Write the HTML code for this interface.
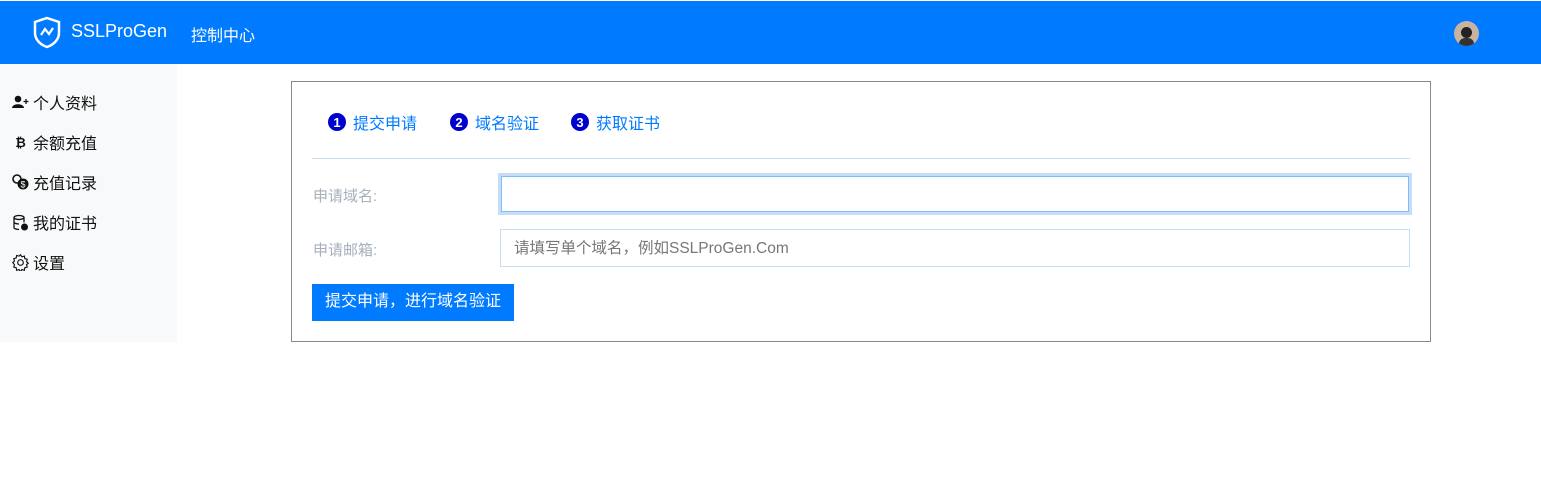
<!DOCTYPE html>
<html><head><meta charset="utf-8"><style>
*{margin:0;padding:0;box-sizing:border-box}
body{width:1541px;height:504px;background:#fff;font-family:"Liberation Sans","Noto Sans CJK SC",sans-serif;position:relative;overflow:hidden;font-size:15px}
.hdr{position:absolute;left:0;top:1px;width:1541px;height:63px;background:#007bff;color:#fff}
.side{position:absolute;left:0;top:64px;width:177px;height:278px;background:#f8f9fa}
.side div{position:absolute;left:12px;font-size:16px;color:#111;display:flex;align-items:center}
.side svg{margin-right:4px}
.card{position:absolute;left:291px;top:81px;width:1140px;height:261px;border:1px solid #888}
.step{position:absolute;top:110px;color:#007bff;display:flex;align-items:center;font-size:16px}
.num{width:18px;height:18px;border-radius:50%;background:#0000cc;color:#fff;font-size:13px;font-weight:bold;display:inline-flex;align-items:center;justify-content:center;margin-right:7px}
.lbl{position:absolute;left:313px;color:#a5b0bb;font-size:15px}
</style></head><body>
<div class="hdr">
<svg style="position:absolute;left:32px;top:15px" width="30" height="33" viewBox="0 0 30 33"><path d="M15 2 L27 6 V17 C27 24 21 29 15 31 C9 29 3 24 3 17 V6 Z" fill="none" stroke="#fff" stroke-width="2.5"/><path d="M9 19 L13 13 L17 18 L21 12" fill="none" stroke="#fff" stroke-width="2.2"/></svg>
<div style="position:absolute;left:71px;top:20px;font-size:18px">SSLProGen</div>
<div style="position:absolute;left:191px;top:21px;font-size:16px">控制中心</div>
<div style="position:absolute;left:1454px;top:20px;width:25px;height:25px;border-radius:50%;background:#c9b3a0;overflow:hidden"><div style="position:absolute;left:7px;top:6px;width:11px;height:11px;border-radius:50%;background:#222"></div><div style="position:absolute;left:5px;top:17px;width:15px;height:8px;background:#333;border-radius:6px 6px 0 0"></div></div>
</div>
<div class="side">
<div style="top:26px"><svg width="17" height="14" viewBox="0 0 17 14"><circle cx="6" cy="4" r="3.3" fill="#111"/><path d="M0 13 C0 8 12 8 12 13Z" fill="#111"/><path d="M14 4v5M11.5 6.5h5" stroke="#111" stroke-width="1.3"/></svg>个人资料</div>
<div style="top:66px"><span style="font-weight:bold;width:17px;margin-right:4px;text-align:center;font-size:13px">₿</span>余额充值</div>
<div style="top:106px"><svg width="17" height="16" viewBox="0 0 17 16"><circle cx="5" cy="5" r="4" fill="none" stroke="#111" stroke-width="1.6"/><circle cx="11" cy="10" r="5.5" fill="#111"/><text x="11" y="13.5" font-size="9" fill="#fff" text-anchor="middle" font-family="Liberation Sans">$</text></svg>充值记录</div>
<div style="top:146px"><svg width="17" height="17" viewBox="0 0 17 17"><ellipse cx="7" cy="3.5" rx="5" ry="2" fill="none" stroke="#111" stroke-width="1.3"/><path d="M2 3.5v10c0 1 2 2 5 2M12 3.5v5M2 8c0 1 2 2 5 2" fill="none" stroke="#111" stroke-width="1.3"/><circle cx="12.5" cy="13" r="3.5" fill="#111"/></svg>我的证书</div>
<div style="top:186px"><svg width="17" height="17" viewBox="0 0 24 24"><path d="M12 1l2 3 3.5-1 .5 3.5 3.5 1-1 3.5 2.5 2-2.5 2 1 3.5-3.5 1-.5 3.5-3.5-1-2 3-2-3-3.5 1-.5-3.5-3.5-1 1-3.5L1 12l2.5-2-1-3.5 3.5-1L6.5 2 10 3z" fill="none" stroke="#111" stroke-width="1.6"/><circle cx="12" cy="12" r="4" fill="none" stroke="#111" stroke-width="1.6"/></svg>设置</div>
</div>
<div class="card"></div>
<div class="step" style="left:328px"><span class="num">1</span>提交申请</div>
<div class="step" style="left:450px"><span class="num">2</span>域名验证</div>
<div class="step" style="left:571px"><span class="num">3</span>获取证书</div>
<div style="position:absolute;left:312px;top:158px;width:1098px;height:1px;background:#c6ddf2"></div>
<div class="lbl" style="top:185px">申请域名:</div>
<div class="lbl" style="top:239px">申请邮箱:</div>
<div style="position:absolute;left:498px;top:173px;width:914px;height:42px;border:3px solid #c7dcf5"><div style="width:100%;height:100%;border:1px solid #80bdff;background:#fff"></div></div>
<div style="position:absolute;left:500px;top:229px;width:910px;height:38px;border:1px solid #c6ddf2;padding:10px 13px;color:#777;font-size:15.5px;line-height:17px">请填写单个域名，例如SSLProGen.Com</div>
<div style="position:absolute;left:312px;top:284px;width:202px;height:37px;background:#007bff;color:#fff;font-size:16px;text-align:center;line-height:36px">提交申请，进行域名验证</div>
</body></html>
